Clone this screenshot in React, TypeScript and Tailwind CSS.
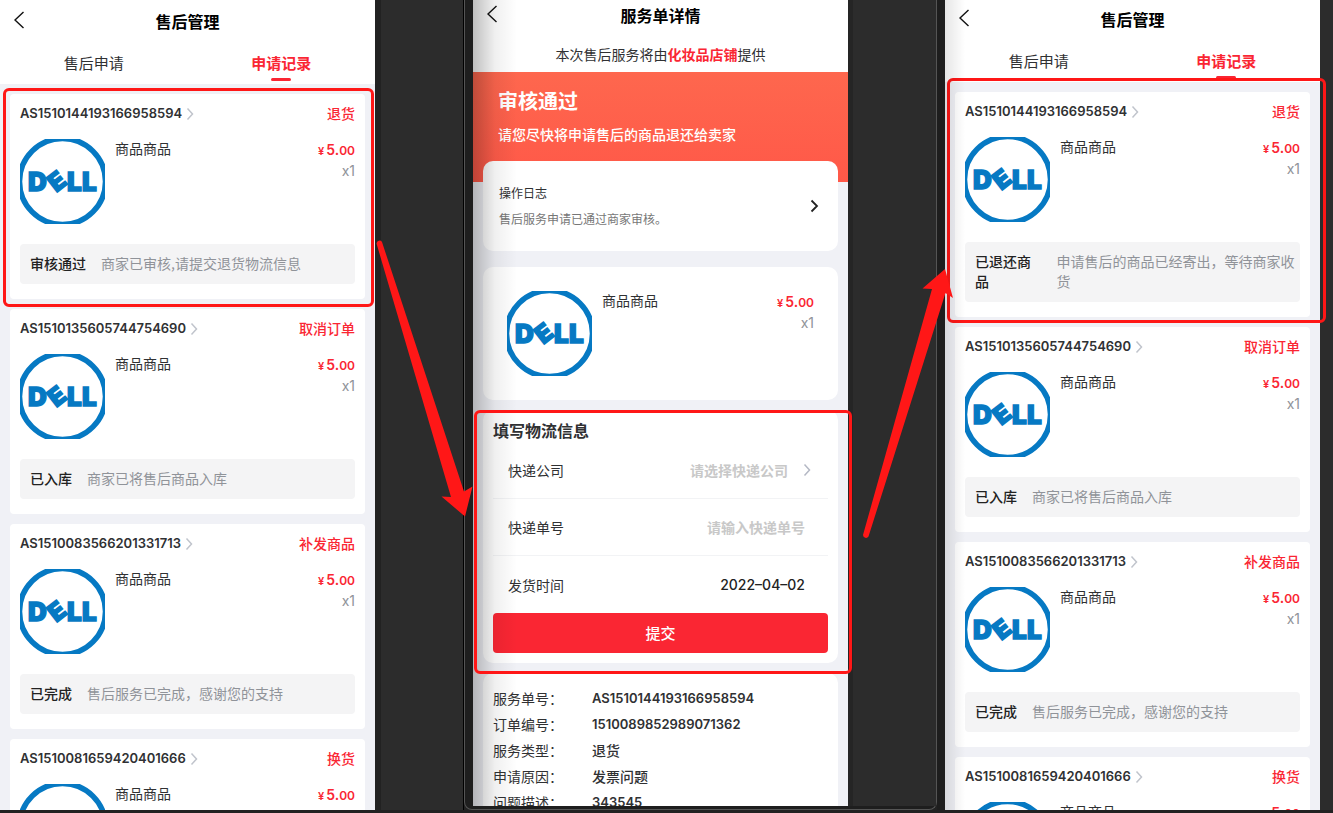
import React from 'react';
import clsx from 'clsx';

type Record = {
  id: string;
  type: string;
  status: string;
  desc: string;
};

const leftRecords: Record[] = [
  { id: 'AS1510144193166958594', type: '退货', status: '审核通过', desc: '商家已审核,请提交退货物流信息' },
  { id: 'AS1510135605744754690', type: '取消订单', status: '已入库', desc: '商家已将售后商品入库' },
  { id: 'AS1510083566201331713', type: '补发商品', status: '已完成', desc: '售后服务已完成，感谢您的支持' },
  { id: 'AS1510081659420401666', type: '换货', status: '已完成', desc: '售后服务已完成，感谢您的支持' },
];

const rightRecords: Record[] = [
  { ...leftRecords[0], status: '已退还商品', desc: '申请售后的商品已经寄出，等待商家收货' },
  ...leftRecords.slice(1),
];

const details = [
  { label: '服务单号', value: 'AS1510144193166958594', numeric: true },
  { label: '订单编号', value: '1510089852989071362', numeric: true },
  { label: '服务类型', value: '退货' },
  { label: '申请原因', value: '发票问题' },
  { label: '问题描述', value: '343545', numeric: true },
];

const Chevron = ({ className }: { className?: string }) => (
  <svg viewBox="0 0 8 14" fill="none" stroke="currentColor" className={clsx('shrink-0', className)}>
    <path d="M1.5 1.5 6.5 7l-5 5.5" strokeWidth="1.5" />
  </svg>
);

const BackButton = ({ className }: { className?: string }) => (
  <button type="button" aria-label="返回" className={clsx('absolute left-3.5', className)}>
    <svg width="11" height="18" viewBox="0 0 11 18" fill="none" stroke="#111" strokeWidth="1.4">
      <path d="M9.5 1 1 9l8.5 8" />
    </svg>
  </button>
);

const DellLogo = () => (
  <svg viewBox="0 0 85 85" className="size-[85px] shrink-0 font-['Inter',sans-serif] font-black">
    <circle cx="42.5" cy="42.5" r="43" fill="#fff" stroke="#0679c3" strokeWidth="5.5" />
    <g fill="#0679c3" stroke="#0679c3" strokeWidth="1.4">
      <text x="8" y="52" fontSize="26">D</text>
      <text x="-8" y="9" fontSize="25" transform="translate(37 42) rotate(-38)">E</text>
      <text x="47" y="52" fontSize="26">L</text>
      <text x="62" y="52" fontSize="26">L</text>
    </g>
  </svg>
);

const Product = () => (
  <div className="flex">
    <DellLogo />
    <p className="ml-2.5 flex-1 text-sm leading-[18px] text-[#303133]">商品商品</p>
    <div className="pt-px text-right font-['Inter',sans-serif]">
      <p className="flex items-baseline justify-end font-semibold text-[#fa2633]">
        <span className="mr-0.5 text-[11px] leading-5">¥</span>
        <span className="text-sm leading-5">5.</span>
        <span className="text-xs leading-5">00</span>
      </p>
      <p className="text-sm leading-5 text-[#909399]">x1</p>
    </div>
  </div>
);

/* Red frame drawn over a block */
const Highlight = ({ className }: { className: string }) => (
  <div className={clsx('pointer-events-none absolute z-10 rounded-md border-3 border-[#ff1717]', className)} />
);

const RecordCard = ({ record, highlight }: { record: Record; highlight?: string }) => (
  <article className="relative rounded bg-white px-2.5 pb-[15px]">
    <header className="flex h-10 items-center justify-between">
      <a href="#detail" className="flex items-center gap-1 text-[#303133]">
        <span className="font-['Inter',sans-serif] text-[13px] font-semibold">{record.id}</span>
        <Chevron className="h-3.5 w-2 text-[#c0c4cc]" />
      </a>
      <span className="pb-0.5 text-sm font-medium text-[#fa2633]">{record.type}</span>
    </header>
    <div className="pt-[5px]">
      <Product />
    </div>
    <div className="mt-5 flex gap-[15px] rounded bg-[#f4f4f5] pt-[9px] pr-1 pb-[11px] pl-2.5 text-sm leading-5">
      <strong className="font-medium text-[#222]">{record.status}</strong>
      <span className="text-[#909399]">{record.desc}</span>
    </div>
    {highlight && <Highlight className={highlight} />}
  </article>
);

const RecordsPhone = ({ records, highlight }: { records: Record[]; highlight: string }) => (
  <div className="h-full bg-[#f0f1f6] [clip-path:inset(0_-8px_0_-8px)]">
    <div className="bg-white">
      <div className="relative flex h-[42px] items-center justify-center">
        <BackButton className="top-[11px]" />
        <h1 className="text-base font-bold text-black">售后管理</h1>
      </div>
      <nav className="grid h-[42px] grid-cols-2 text-center text-[15px] leading-[42px]">
        <a href="#apply" className="text-[#303133]">售后申请</a>
        <a href="#records" className="relative font-bold text-[#fa2633]">
          申请记录
          <span className="absolute bottom-[3px] left-1/2 h-[3px] w-5 -translate-x-1/2 rounded-sm bg-[#fa2633]" />
        </a>
      </nav>
    </div>
    <div className="flex flex-col gap-2.5 p-2.5">
      {records.map((record, i) => (
        <RecordCard key={record.id} record={record} highlight={i === 0 ? highlight : undefined} />
      ))}
    </div>
  </div>
);

const DetailPhone = () => (
  <div className="relative z-30 h-full min-w-0 flex-[375] bg-[#f0f1f6] [clip-path:inset(0_-8px_0_-8px)]">
    <div className="relative flex h-[30px] items-center justify-center bg-white">
      <BackButton className="top-[5px]" />
      <h1 className="text-base font-bold text-black">服务单详情</h1>
    </div>
    <p className="bg-white pt-3.5 pb-2 text-center text-sm text-[#303133]">
      本次售后服务将由<span className="font-bold text-[#fa2633]">化妆品店铺</span>提供
    </p>
    <div className="h-[110px] bg-linear-to-t from-[#ff5848] to-[#fe674e] px-[25px] pt-3.5 text-white">
      <h2 className="text-xl leading-[30px] font-bold">审核通过</h2>
      <p className="pt-2 text-sm font-medium">请您尽快将申请售后的商品退还给卖家</p>
    </div>

    <div className="relative -mt-[21px] px-2.5">
      <a href="#log" className="flex items-center justify-between rounded-[10px] bg-white px-4 py-[19px] text-xs leading-[26px]">
        <span>
          <span className="block text-[#303133]">操作日志</span>
          <span className="block text-[#777]">售后服务申请已通过商家审核。</span>
        </span>
        <svg width="9" height="14" viewBox="0 0 9 14" fill="none" stroke="#222" strokeWidth="1.8" className="mr-[3px]">
          <path d="M1.5 1.5 7 7l-5.5 5.5" />
        </svg>
      </a>

      <div className="mt-4 rounded-[10px] bg-white p-6">
        <Product />
      </div>

      <form className="relative mt-2.5 rounded-[10px] bg-white p-2.5" onSubmit={(e) => e.preventDefault()}>
        <h2 className="pb-0.5 text-base leading-5 font-bold text-[#303133]">填写物流信息</h2>
        <div className="flex h-[57px] items-center border-b border-[#f2f3f5] px-[15px] text-sm">
          <label htmlFor="company" className="text-[#303133]">快递公司</label>
          <select
            id="company"
            defaultValue=""
            className="min-w-0 flex-1 appearance-none bg-transparent pr-[15px] text-right font-bold text-[#c8c8c8] [text-align-last:right]"
          >
            <option value="">请选择快递公司</option>
          </select>
          <Chevron className="mr-0.5 h-3.5 w-2 text-[#b4b8c4]" />
        </div>
        <div className="flex h-[57px] items-center border-b border-[#f2f3f5] pr-[23px] pl-[15px] text-sm">
          <label htmlFor="number" className="text-[#303133]">快递单号</label>
          <input
            id="number"
            placeholder="请输入快递单号"
            className="min-w-0 flex-1 text-right font-bold placeholder:text-[#c8c8c8]"
          />
        </div>
        <div className="flex h-[57px] items-center pr-[23px] pl-[15px] text-sm">
          <label htmlFor="date" className="text-[#303133]">发货时间</label>
          <input
            id="date"
            defaultValue="2022–04–02"
            className="min-w-0 flex-1 text-right font-['Inter',sans-serif] font-medium text-[#222]"
          />
        </div>
        <button type="submit" className="h-10 w-full rounded bg-[#fa2633] text-[15px] font-medium text-white">
          提交
        </button>
        <Highlight className="top-0 -right-[14px] -bottom-[11px] -left-[9px]" />
      </form>

      <dl className="mt-2.5 rounded-[10px] bg-white px-2.5 py-3 text-sm leading-[26px] text-[#303133]">
        {details.map((item) => (
          <div key={item.label} className="flex">
            <dt className="w-[99px]">{item.label}：</dt>
            <dd
              className={
                item.numeric
                  ? "font-['Inter',sans-serif] text-[13px] leading-[26px] font-semibold"
                  : 'font-medium'
              }
            >
              {item.value}
            </dd>
          </div>
        ))}
      </dl>
    </div>
    <div className="pointer-events-none absolute inset-y-0 left-0 w-11 bg-linear-to-r from-black/25 via-black/6 to-transparent" />
  </div>
);

export default function App() {
  return (
    <div className="h-screen overflow-hidden bg-[#222] pb-[3px] font-['Noto_Sans_CJK_SC',sans-serif]">
      <main className="grid h-full grid-cols-[375fr_89fr_473fr_8fr_375fr_13fr] grid-rows-[minmax(0,1fr)]">
        <div className="min-w-0">
          <RecordsPhone records={leftRecords} highlight="-top-1.5 -right-[9px] -bottom-2 -left-[7px]" />
        </div>

        <div className="relative z-20 border-r border-l-6 border-r-black border-l-[#222] bg-[#2c2c2c]">
          <svg width="110" height="290" viewBox="370 235 110 290" className="absolute top-[235px] -left-[11px]" fill="#ff1717">
            <path d="M376.500 243.500a3 3 0 0 1 5.500-1.500L464 491.500l8.500-5L465 516.500l-23.500-20 9.500.500Z" />
          </svg>
        </div>

        <div className="relative flex rounded-b-lg border border-t-0 border-[#555] bg-[#1e1e1e] pb-[3px] pl-2">
          <DetailPhone />
          <div className="relative z-20 min-w-0 flex-[88]">
            <div className="h-full border-l-5 border-[#252525] bg-[#2c2c2c]" />
            <svg width="110" height="290" viewBox="855 255 110 290" className="absolute top-[255px] left-[7px]" fill="#ff1717">
              <path d="M863 535 932 289l-9.500-.5 22.500-19.500 8 29-7.500-5L868.500 536.500a3 3 0 0 1-5.500-1.500Z" />
            </svg>
          </div>
        </div>

        <div className="bg-[#1e1e1e]" />

        {/* Scrolled up by two pixels against the first phone */}
        <div className="relative min-w-0">
          <div className="-mt-0.5 h-[calc(100%+2px)]">
            <RecordsPhone records={rightRecords} highlight="-top-[14px] -right-[16px] -bottom-1.5 -left-2" />
          </div>
          <div className="pointer-events-none absolute inset-y-0 left-0 w-5 bg-linear-to-r from-black/10 to-transparent" />
        </div>

        <div className="bg-[#2c2c2c]" />
      </main>
    </div>
  );
}
